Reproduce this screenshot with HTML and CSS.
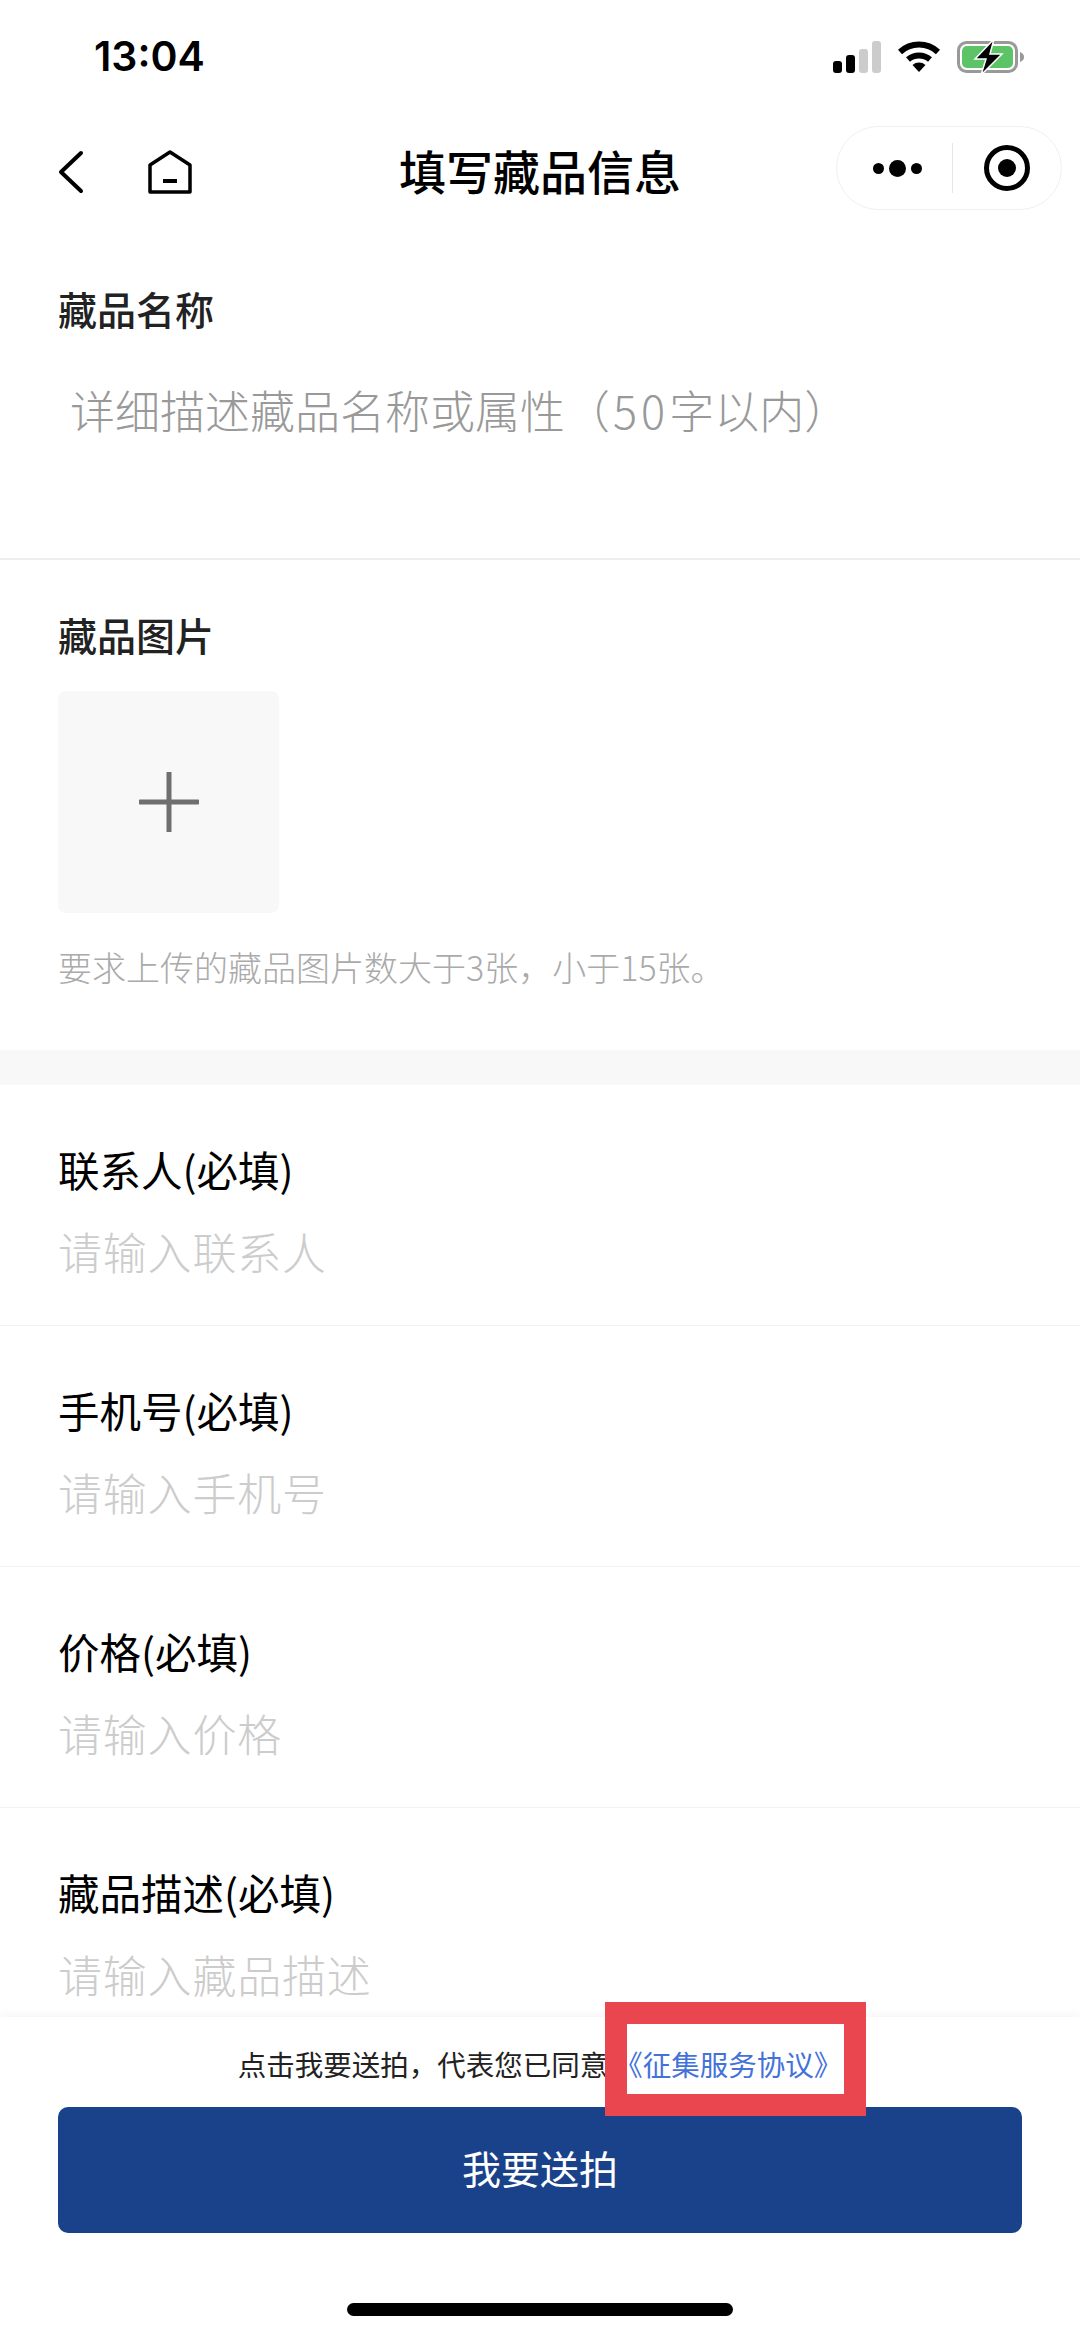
FILE: index.html
```html
<!DOCTYPE html>
<html lang="zh-CN">
<head>
  <meta charset="utf-8">
  <title>填写藏品信息</title>
  <link rel="stylesheet" href="styles.css">
</head>
<body>
  <div class="page">
    <!-- Status bar -->
    <div class="status-bar">
      <span class="status-time">13:04</span>
      <div class="status-icons">
        <svg class="icon-signal" viewBox="0 0 48 32" width="48" height="32">
          <rect x="0" y="20" width="9" height="12" rx="3" fill="#000"/>
          <rect x="13" y="14" width="9" height="18" rx="3" fill="#000"/>
          <rect x="26" y="8" width="9" height="24" rx="3" fill="#ccc"/>
          <rect x="39" y="0" width="9" height="32" rx="3" fill="#ccc"/>
        </svg>
        <svg class="icon-wifi" viewBox="0 0 42 32" width="42" height="32">
          <path d="M2 11 A28 28 0 0 1 40 11" fill="none" stroke="#000" stroke-width="6"/>
          <path d="M10 18.5 A17 17 0 0 1 32 18.5" fill="none" stroke="#000" stroke-width="6"/>
          <path d="M14.5 24 A10 10 0 0 1 27.500 24 L21 31 Z" fill="#000"/>
        </svg>
        <svg class="icon-battery" viewBox="0 0 68 36" width="68" height="36">
          <rect x="1.5" y="3.5" width="58" height="29" rx="8" fill="none" stroke="#999" stroke-width="3"/>
          <rect x="5" y="7" width="51" height="22" rx="5" fill="#5cc466"/>
          <path d="M63 13 C66 14 67 16 67 18 C67 20 66 22 63 23 Z" fill="#999"/>
          <path d="M37 0 L18 20 L29 20 L24 36 L45 15 L33 15 Z" fill="#000" stroke="#fff" stroke-width="1.500"/>
        </svg>
      </div>
    </div>

    <!-- Nav bar -->
    <div class="nav-bar">
      <div class="nav-left">
        <svg viewBox="0 0 26 44" width="26" height="44">
          <path d="M23 3 L3 22 L23 41" fill="none" stroke="#000" stroke-width="4" stroke-linecap="round" stroke-linejoin="round"/>
        </svg>
        <svg viewBox="0 0 44 44" width="44" height="44">
          <path d="M2 42 V15 L22 2 L42 15 V42 Z" fill="none" stroke="#000" stroke-width="3.500" stroke-linejoin="round"/>
          <rect x="15" y="29" width="14" height="4" fill="#000"/>
        </svg>
      </div>
      <h1 class="nav-title">填写藏品信息</h1>
      <div class="capsule">
        <div class="capsule-more">
          <span class="dot"></span><span class="dot dot-big"></span><span class="dot"></span>
        </div>
        <div class="capsule-line"></div>
        <div class="capsule-close">
          <span class="close-ring"><span class="close-core"></span></span>
        </div>
      </div>
    </div>

    <div class="content">
      <!-- Name -->
      <div class="section section-name">
        <div class="section-title">藏品名称</div>
        <div class="name-placeholder">详细描述藏品名称或属性（<span class="digits">50</span>字以内）</div>
      </div>

      <!-- Pictures -->
      <div class="section section-pics">
        <div class="section-title">藏品图片</div>
        <div class="upload-tile">
          <svg viewBox="0 0 60 60" width="60" height="60">
            <path d="M30 1 V59 M1 30 H59" stroke="#6f6f6f" stroke-width="5" stroke-linecap="round"/>
          </svg>
        </div>
        <p class="hint">要求上传的藏品图片数大于3张，小于15张。</p>
      </div>

      <div class="band"></div>

      <!-- Fields -->
      <div class="field">
        <div class="field-label">联系人(必填)</div>
        <div class="field-input">请输入联系人</div>
      </div>
      <div class="field">
        <div class="field-label">手机号(必填)</div>
        <div class="field-input">请输入手机号</div>
      </div>
      <div class="field">
        <div class="field-label">价格(必填)</div>
        <div class="field-input">请输入价格</div>
      </div>
      <div class="field">
        <div class="field-label">藏品描述(必填)</div>
        <div class="field-input">请输入藏品描述</div>
      </div>
    </div>

    <!-- Bottom bar -->
    <div class="footer">
      <div class="agreement">点击我要送拍，代表您已同意<a class="agreement-link">《征集服务协议》</a></div>
      <button class="btn-submit">我要送拍</button>
      <div class="home-bar"></div>
      <div class="mark-box"></div>
    </div>
  </div>
</body>
</html>
```

FILE: styles.css
```css
html, body {
  margin: 0;
  padding: 0;
  background: #fff;
}

body {
  font-family: "Noto Sans CJK SC", "Noto Sans", sans-serif;
  color: #000;
}

.page {
  width: 1080px;
  height: 2337px;
  display: flex;
  flex-direction: column;
  overflow: hidden;
}

.status-bar {
  height: 114px;
  flex: none;
  display: flex;
  justify-content: space-between;
  align-items: center;
  padding: 0 55px 0 94px;
  box-sizing: border-box;
}

.status-time {
  font-family: Inter, sans-serif;
  font-size: 41px;
  font-weight: 600;
  padding-bottom: 2px;
}

.status-icons {
  display: flex;
  align-items: center;
  gap: 17px;
}

.nav-bar {
  height: 116px;
  flex: none;
  display: flex;
  align-items: center;
  justify-content: space-between;
  padding: 0 18px 0 58px;
  position: relative;
  box-sizing: border-box;
}

.nav-left {
  display: flex;
  align-items: center;
  gap: 64px;
}

.nav-title {
  margin: 0;
  padding-bottom: 6px;
  position: absolute;
  left: 0;
  right: 0;
  text-align: center;
  font-size: 47px;
  font-weight: 500;
}

.capsule {
  width: 226px;
  height: 84px;
  margin-bottom: 8px;
  box-sizing: border-box;
  border: 1px solid #f0f0f0;
  border-radius: 42px;
  display: flex;
  align-items: center;
}

.capsule-more {
  flex: 1;
  display: flex;
  justify-content: center;
  align-items: center;
  gap: 5px;
  padding-left: 6px;
}

.dot {
  width: 11px;
  height: 11px;
  border-radius: 50%;
  background: #000;
}

.dot-big {
  width: 17px;
  height: 17px;
}

.capsule-line {
  width: 1px;
  height: 50px;
  background: #e6e6e6;
}

.capsule-close {
  flex: 1;
  display: flex;
  justify-content: center;
  align-items: center;
}

.close-ring {
  width: 46px;
  height: 46px;
  box-sizing: border-box;
  border: 5px solid #000;
  border-radius: 50%;
  display: flex;
  justify-content: center;
  align-items: center;
}

.close-core {
  width: 18px;
  height: 18px;
  border-radius: 50%;
  background: #000;
}

.content {
  flex: 1;
  min-height: 0;
  overflow: hidden;
}

.section {
  box-sizing: border-box;
  padding: 0 58px;
}

.section-name {
  height: 330px;
  padding-top: 54px;
  border-bottom: 2px solid #eeeeee;
}

.section-title {
  font-size: 39px;
  font-weight: 500;
  line-height: 48px;
  color: #222;
}

.name-placeholder {
  margin-top: 49px;
  padding-left: 12px;
  font-size: 45px;
  line-height: 58px;
  color: #999;
  font-weight: 300;
}

.digits {
  padding-left: 3px;
  letter-spacing: 4px;
}

.section-pics {
  height: 490px;
  padding-top: 50px;
}

.upload-tile {
  width: 221px;
  height: 222px;
  margin-top: 33px;
  background: #f8f8f8;
  border-radius: 8px;
  display: flex;
  justify-content: center;
  align-items: center;
}

.hint {
  margin: 30px 0 0;
  font-size: 34px;
  line-height: 48px;
  color: #aaa;
  font-weight: 300;
}

.band {
  height: 35px;
  background: #f8f8f8;
}

.field {
  height: 241px;
  box-sizing: border-box;
  padding: 55px 58px 0;
  border-bottom: 1px solid #f2f2f2;
}

.field:last-child {
  border-bottom: none;
}

.field-label {
  font-size: 41.5px;
  line-height: 58px;
}

.field-input {
  margin-top: 23px;
  font-size: 44px;
  letter-spacing: 0.8px;
  line-height: 60px;
  color: #ccc;
  font-weight: 300;
}

.footer {
  flex: none;
  height: 320px;
  position: relative;
  background: #fff;
  box-shadow: 0 -3px 8px rgba(0, 0, 0, 0.04);
  display: flex;
  flex-direction: column;
  align-items: center;
}

.agreement {
  margin-top: 22px;
  margin-bottom: 18px;
  height: 50px;
  font-size: 28.5px;
  line-height: 50px;
  color: #222;
}

.agreement-link {
  margin-left: 6px;
  color: #4472d8;
}

.btn-submit {
  width: 964px;
  height: 126px;
  padding: 0 0 6px;
  border: none;
  border-radius: 10px;
  background: #1a428a;
  color: #fff;
  font-family: inherit;
  font-size: 39px;
}

.home-bar {
  width: 386px;
  height: 13px;
  margin-top: 70px;
  border-radius: 7px;
  background: #000;
}

/* red annotation drawn on top of the screenshot */
.mark-box {
  position: absolute;
  left: 605px;
  top: -15px;
  width: 261px;
  height: 114px;
  box-sizing: border-box;
  border: 22px solid #ea4650;
}
```
